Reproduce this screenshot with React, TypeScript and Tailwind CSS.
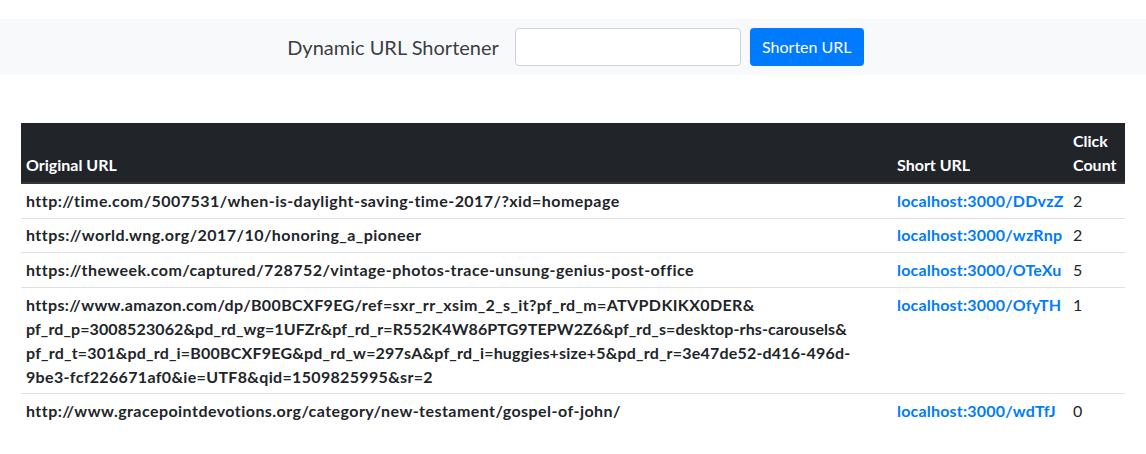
import React from "react";

const font = { fontFamily: "Lato, 'Noto Sans', sans-serif" };

interface Row {
    original: React.ReactNode;
    short: string;
    clicks: number;
}

const rows: Row[] = [
    {
        original: "http://time.com/5007531/when-is-daylight-saving-time-2017/?xid=homepage",
        short: "localhost:3000/DDvzZ",
        clicks: 2,
    },
    {
        original: "https://world.wng.org/2017/10/honoring_a_pioneer",
        short: "localhost:3000/wzRnp",
        clicks: 2,
    },
    {
        original: "https://theweek.com/captured/728752/vintage-photos-trace-unsung-genius-post-office",
        short: "localhost:3000/OTeXu",
        clicks: 5,
    },
    {
        // long amazon link, broken where the browser broke it
        original: (
            <>
                <span className="block whitespace-nowrap tracking-[0.37px]">https://www.amazon.com/dp/B00BCXF9EG/ref=sxr_rr_xsim_2_s_it?pf_rd_m=ATVPDKIKX0DER&amp;</span>
                <span className="block whitespace-nowrap tracking-[0.1px]">pf_rd_p=3008523062&amp;pd_rd_wg=1UFZr&amp;pf_rd_r=R552K4W86PTG9TEPW2Z6&amp;pf_rd_s=desktop-rhs-carousels&amp;</span>
                <span className="block whitespace-nowrap tracking-[0.2px]">pf_rd_t=301&amp;pd_rd_i=B00BCXF9EG&amp;pd_rd_w=297sA&amp;pf_rd_i=huggies+size+5&amp;pd_rd_r=3e47de52-d416-496d-</span>
                <span className="block whitespace-nowrap tracking-[0.33px]">9be3-fcf226671af0&amp;ie=UTF8&amp;qid=1509825995&amp;sr=2</span>
            </>
        ),
        short: "localhost:3000/OfyTH",
        clicks: 1,
    },
    {
        original: "http://www.gracepointdevotions.org/category/new-testament/gospel-of-john/",
        short: "localhost:3000/wdTfJ",
        clicks: 0,
    },
];

export default function App() {
    return (
        <div className="min-h-[454px] bg-white text-[16px] leading-[24px] text-[#212529]" style={font}>
            {/* Navbar */}
            <nav className="mt-[19px] flex h-[56px] items-center justify-center bg-[#f8f9fa] pl-[5px]">
                <span className="mr-[16px] text-[20px] leading-[30px] text-[#212529]/90">Dynamic URL Shortener</span>
                <form className="flex items-center gap-[9px]" onSubmit={(e) => e.preventDefault()}>
                    <input
                        type="text"
                        className="h-[38px] w-[226px] rounded-[4px] border border-[#ced4da] bg-white px-3"
                    />
                    <button
                        type="submit"
                        className="h-[38px] w-[114px] rounded-[4px] bg-[#007bff] text-[16px] text-white"
                    >
                        Shorten URL
                    </button>
                </form>
            </nav>

            {/* Table */}
            <div className="mx-[21px] mt-[48px]">
                <table className="w-full table-fixed border-collapse">
                    <colgroup>
                        <col className="w-[871px]" />
                        <col className="w-[176px]" />
                        <col />
                    </colgroup>
                    <thead>
                        <tr className="bg-[#212529] text-white">
                            <th className="border-b-2 border-[#32383e] px-[5px] pb-[5px] pt-[6px] text-left align-bottom font-bold">Original URL</th>
                            <th className="border-b-2 border-[#32383e] px-[5px] pb-[5px] pt-[6px] text-left align-bottom font-bold">Short URL</th>
                            <th className="border-b-2 border-[#32383e] px-[5px] pb-[5px] pt-[6px] text-left align-bottom font-bold">Click Count</th>
                        </tr>
                    </thead>
                    <tbody>
                        {rows.map((row, i) => (
                            <tr key={i}>
                                <td className={`px-[5px] py-[4.8px] align-top font-bold tracking-[0.45px] ${i > 0 ? "border-t border-[#dee2e6]" : ""}`}>
                                    {row.original}
                                </td>
                                <td className={`px-[5px] py-[4.8px] align-top ${i > 0 ? "border-t border-[#dee2e6]" : ""}`}>
                                    <a href="#" className="whitespace-nowrap font-bold tracking-[0.2px] text-[#007bff]">{row.short}</a>
                                </td>
                                <td className={`px-[5px] py-[4.8px] align-top ${i > 0 ? "border-t border-[#dee2e6]" : ""}`}>
                                    {row.clicks}
                                </td>
                            </tr>
                        ))}
                    </tbody>
                </table>
            </div>
        </div>
    );
}
